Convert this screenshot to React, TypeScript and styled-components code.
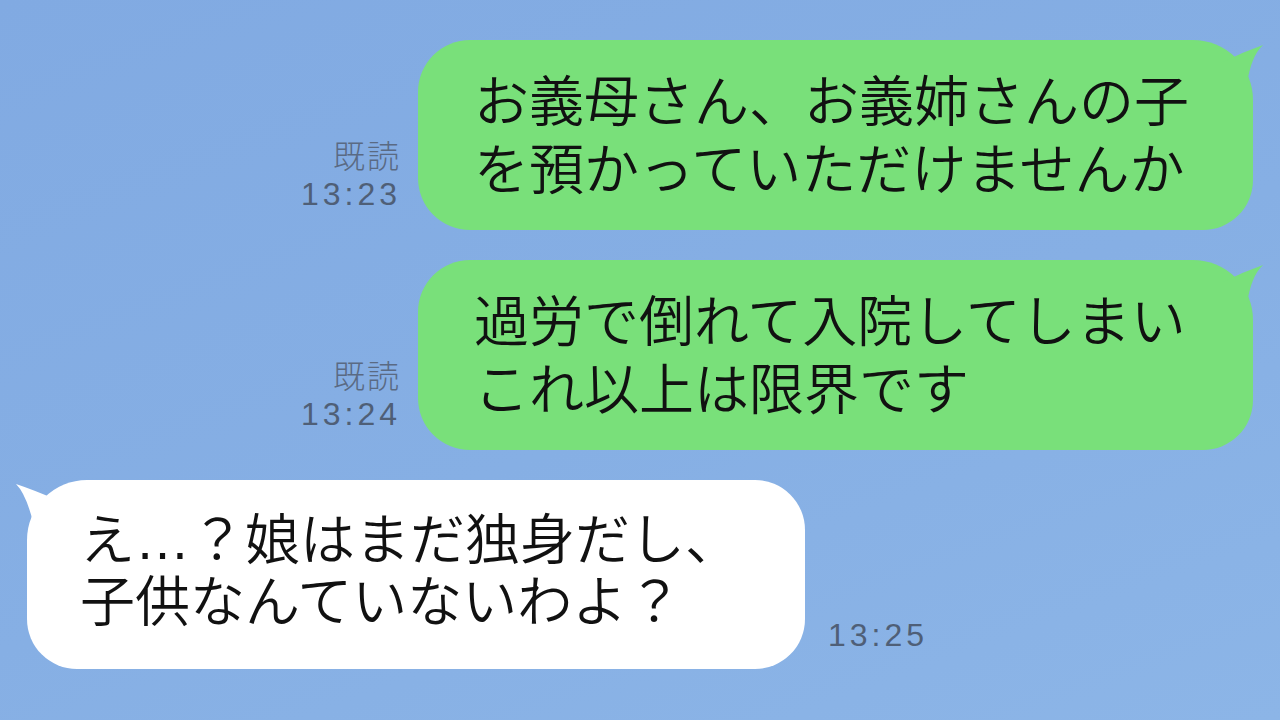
import styled, { createGlobalStyle } from "styled-components";

const GlobalStyle = createGlobalStyle`
  html, body {
    margin: 0;
    padding: 0;
  }
  body {
    font-family: "Noto Sans CJK JP", "Noto Sans", sans-serif;
  }
`;

type Message = {
  from: "me" | "them";
  lines: string[];
  time: string;
  read?: boolean;
};

const messages: Message[] = [
  {
    from: "me",
    lines: ["お義母さん、お義姉さんの子", "を預かっていただけませんか"],
    time: "13:23",
    read: true,
  },
  {
    from: "me",
    lines: ["過労で倒れて入院してしまい", "これ以上は限界です"],
    time: "13:24",
    read: true,
  },
  {
    from: "them",
    lines: ["え…？娘はまだ独身だし、", "子供なんていないわよ？"],
    time: "13:25",
  },
];

export default function App() {
  return (
    <>
      <GlobalStyle />
      <Chat>
        {messages.map((m, i) =>
          m.from === "me" ? (
            <OutRow key={i}>
              <Meta $align="right">
                {m.read && <ReadMark>既読</ReadMark>}
                <Time>{m.time}</Time>
              </Meta>
              <OutBubble>
                <OutHorn viewBox="0 0 44 50" width="44" height="50">
                  <path d="M0 22 Q20 12 40 5 Q28 16 24 44 Z" fill="#79e07a" />
                </OutHorn>
                {m.lines.map((l) => (
                  <Line key={l}>{l}</Line>
                ))}
              </OutBubble>
            </OutRow>
          ) : (
            <InRow key={i}>
              <InBubble>
                <InHorn viewBox="0 0 50 50" width="50" height="50">
                  <path d="M44 20 Q21 10 3 4 Q13 14 20 42 Z" fill="#ffffff" />
                </InHorn>
                {m.lines.map((l) => (
                  <Line key={l} $tight>
                    {l}
                  </Line>
                ))}
              </InBubble>
              <Meta $align="left">
                <Time>{m.time}</Time>
              </Meta>
            </InRow>
          )
        )}
      </Chat>
    </>
  );
}

const Chat = styled.main`
  width: 1280px;
  height: 720px;
  box-sizing: border-box;
  overflow: hidden;
  display: flex;
  flex-direction: column;
  gap: 30px;
  padding: 40px 27px 0 27px;
  background: linear-gradient(160deg, #81aae2 0%, #86afe4 55%, #8cb5e7 100%);
`;

const OutRow = styled.div`
  display: flex;
  justify-content: flex-end;
  align-items: flex-end;
`;

const InRow = styled.div`
  display: flex;
  justify-content: flex-start;
  align-items: flex-end;
`;

const Meta = styled.div<{ $align: "left" | "right" }>`
  display: flex;
  flex-direction: column;
  align-items: ${(p) => (p.$align === "right" ? "flex-end" : "flex-start")};
  margin: ${(p) => (p.$align === "right" ? "0 17px 16px 0" : "0 0 14px 23px")};
  color: #4f5f77;
`;

const ReadMark = styled.span`
  font-family: "Noto Sans CJK JP", sans-serif;
  font-size: 32px;
  font-weight: 300;
  line-height: 40px;
  letter-spacing: 2px;
  color: #5a6a83;
`;

const Time = styled.span`
  font-family: "Liberation Sans", Arial, sans-serif;
  font-size: 32px;
  line-height: 40px;
  letter-spacing: 4px;
`;

const OutBubble = styled.div`
  position: relative;
  width: 835px;
  box-sizing: border-box;
  padding: 28px 60px 26px 56px;
  background: #79e07a;
  border-radius: 52px 60px 50px 52px;
`;

const InBubble = styled.div`
  position: relative;
  width: 778px;
  box-sizing: border-box;
  padding: 29px 40px 36px 53px;
  background: #ffffff;
  border-radius: 60px 50px 50px 50px;
`;

const OutHorn = styled.svg`
  position: absolute;
  top: 0;
  right: -14px;
  display: block;
`;

const InHorn = styled.svg`
  position: absolute;
  top: 0;
  left: -14px;
  display: block;
`;

const Line = styled.div<{ $tight?: boolean }>`
  font-family: "Liberation Sans", "Noto Sans CJK JP", sans-serif;
  font-size: 55px;
  font-weight: 350;
  line-height: ${(p) => (p.$tight ? "62px" : "68px")};
  color: #111111;
  white-space: nowrap;
`;
